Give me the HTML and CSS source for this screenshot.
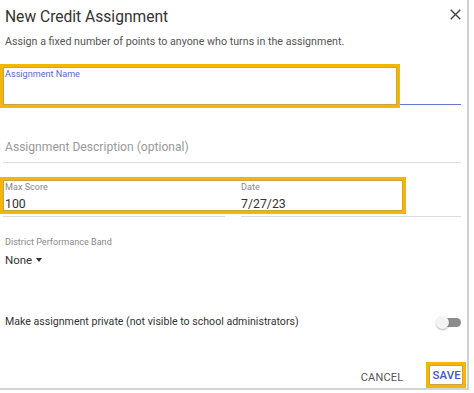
FILE: index.html
```html
<!DOCTYPE html>
<html lang="en">
<head>
    <meta charset="UTF-8" />
    <title>New Credit Assignment</title>
    <link rel="stylesheet" href="styles.css">
</head>
<body>
<div class="dialog">
    <div class="dialog-head">
        <h1>New Credit Assignment</h1>
        <svg class="close" width="11" height="11" viewBox="0 0 11 11">
            <path d="M0.7 0.7 L10.3 10.3 M10.3 0.7 L0.7 10.3" stroke="#444" stroke-width="1.4" fill="none"/>
        </svg>
    </div>
    <p class="intro">Assign a fixed number of points to anyone who turns in the assignment.</p>

    <div class="field field-name">
        <label class="focused">Assignment Name</label>
        <div class="value"></div>
        <div class="mark mark-name"></div>
    </div>

    <div class="field field-desc">
        <div class="placeholder">Assignment Description (optional)</div>
    </div>

    <div class="row-fields">
        <div class="field field-half">
            <label>Max Score</label>
            <div class="value">100</div>
        </div>
        <div class="field field-half field-date">
            <label>Date</label>
            <div class="value">7/27/23</div>
        </div>
        <div class="mark mark-row"></div>
    </div>

    <div class="band">
        <label>District Performance Band</label>
        <div class="select">None <span class="caret"></span></div>
    </div>

    <div class="private-row">
        <span>Make assignment private (not visible to school administrators)</span>
        <div class="toggle"><div class="thumb"></div></div>
    </div>

    <div class="actions">
        <button class="btn btn-cancel">CANCEL</button>
        <button class="btn btn-save">SAVE</button>
    </div>
</div>
</body>
</html>
```

FILE: styles.css
```css
body {
    margin: 0;
    font-family: Roboto, 'Liberation Sans', sans-serif;
    background-color: #ffffff;
    color: #333;
}

.dialog {
    width: 469px;
    height: 390px;
    box-sizing: border-box;
    background-color: white;
    border-right: 2px solid #cfcfcf;
    border-bottom: 2px solid #d4d4d4;
    padding: 0 6px 0 3px;
    display: flex;
    flex-direction: column;
}

.dialog-head {
    display: flex;
    justify-content: space-between;
    align-items: flex-start;
    height: 33px;
    padding-left: 2px;
}

.dialog-head h1 {
    margin: 0;
    font-size: 15.6px;
    font-weight: 400;
    line-height: 34px;
    color: #333;
}

.close {
    margin-top: 9px;
    margin-right: 0;
}

.intro {
    margin: 2px 0 0 2px;
    font-size: 10.7px;
    line-height: 14px;
    color: #555;
}

.field {
    position: relative;
    border-bottom: 1px solid #dcdcdc;
}

.field label {
    display: block;
    font-size: 9.1px;
    line-height: 12px;
    color: #8a8a8a;
    padding-left: 2px;
}

.field label.focused {
    color: #5568d8;
}

.field .value {
    margin-top: 3px;
    font-size: 12.3px;
    line-height: 16px;
    height: 16px;
    color: #333;
    padding-left: 2px;
}

.field-name {
    margin-top: 19px;
    height: 36px;
    border-bottom-color: #6474d8;
}

.field-desc {
    margin-top: 34px;
    height: 23px;
}

.placeholder {
    font-size: 12.1px;
    line-height: 16px;
    color: #9a9a9a;
    padding-left: 2px;
}

.row-fields {
    position: relative;
    display: flex;
    gap: 16px;
    margin-top: 18px;
}

.field-half {
    flex: 222px 0 0;
    height: 35px;
}

.field-date {
    flex: 1;
}

.field-date label,
.field-date .value {
    padding-left: 0;
}

.mark {
    position: absolute;
    border: 3px solid #f4b602;
    box-shadow: inset 0 0 0 1px #caa43c;
    box-sizing: border-box;
}

.mark-name {
    left: -3px;
    top: -4px;
    width: 400px;
    height: 44px;
}

.mark-row {
    left: -3px;
    top: -4px;
    width: 406px;
    height: 37px;
}

.band {
    margin-top: 19px;
}

.band label {
    display: block;
    font-size: 9.1px;
    line-height: 12px;
    color: #8a8a8a;
    padding-left: 2px;
}

.select {
    margin-top: 4px;
    font-size: 11.5px;
    line-height: 16px;
    color: #333;
    padding-left: 2px;
}

.caret {
    display: inline-block;
    width: 0;
    height: 0;
    margin-left: 1px;
    border-left: 3.5px solid transparent;
    border-right: 3.5px solid transparent;
    border-top: 4px solid #333;
    vertical-align: 2px;
}

.private-row {
    margin-top: 46px;
    display: flex;
    justify-content: space-between;
    align-items: center;
    font-size: 10.6px;
    line-height: 16px;
    color: #333;
    padding-left: 2px;
}

.toggle {
    position: relative;
    width: 22px;
    height: 9px;
    border-radius: 5px;
    background-color: #8c8c8c;
}

.thumb {
    position: absolute;
    left: -3px;
    top: -2px;
    width: 13px;
    height: 13px;
    border-radius: 50%;
    background-color: #f4f4f4;
    box-shadow: 0 1px 2px rgba(0,0,0,0.3);
}

.actions {
    margin-top: auto;
    display: flex;
    justify-content: flex-end;
    align-items: center;
    gap: 23px;
}

.btn {
    background: none;
    border: none;
    font-family: Roboto, 'Liberation Sans', sans-serif;
    font-size: 11px;
    line-height: 14px;
    color: #555;
    padding: 0;
    letter-spacing: 0.2px;
}

.btn-cancel {
    margin-top: 5px;
}

.btn-save {
    font-size: 11.4px;
    color: #3f56c9;
    font-weight: 500;
    border: 3px solid #f4b602;
    box-shadow: inset 0 0 0 1px #caa43c;
    padding: 3px 2px 3px 3px;
    margin-right: -5px;
}
```
